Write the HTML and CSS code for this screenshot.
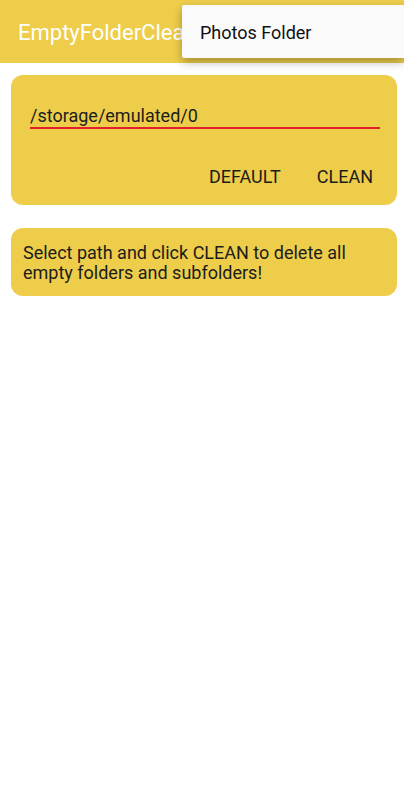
FILE: index.html
```html
<!DOCTYPE html>
<html lang="en">
<head>
    <meta charset="UTF-8">
    <meta name="viewport" content="width=device-width, initial-scale=1.0">
    <title>EmptyFolderCleaner</title>
    <link rel="stylesheet" href="styles.css">
</head>
<body>

<div class="toolbar">
    <span class="title">EmptyFolderCleaner</span>
</div>

<div class="menu">
    <div class="menu-item">Photos Folder</div>
</div>

<div class="content">
    <div class="card path-card">
        <input type="text" class="path-input" value="/storage/emulated/0">
        <div class="actions">
            <button class="flat-btn">DEFAULT</button>
            <button class="flat-btn">CLEAN</button>
        </div>
    </div>

    <div class="card info-card">
        Select path and click CLEAN to delete all empty folders and subfolders!
    </div>
</div>

</body>
</html>
```

FILE: styles.css
```css
body {
    font-family: Roboto, "Liberation Sans", sans-serif;
    margin: 0;
    padding: 0;
    background-color: #fff;
    color: #1c1c1c;
}
.toolbar {
    height: 63px;
    background-color: #edcd4a;
    display: flex;
    align-items: center;
    padding-left: 18px;
    overflow: hidden;
}
.title {
    color: #fff;
    font-size: 22px;
    white-space: nowrap;
    margin-top: 1px;
}
.menu {
    position: absolute;
    top: 5px;
    left: 182px;
    right: 0;
    height: 53px;
    background-color: #fafafa;
    border-radius: 2px 0 0 2px;
    box-shadow: 0 4px 10px rgba(0, 0, 0, 0.3);
    display: flex;
    align-items: center;
}
.menu-item {
    padding-left: 18px;
    font-size: 18px;
    color: #111;
    margin-top: 1px;
}
.content {
    padding: 12px 7px 0 11px;
}
.card {
    background-color: #edcd4a;
    border-radius: 12px;
}
.path-card {
    padding: 29px 17px 18px 19px;
}
.path-input {
    display: block;
    width: 100%;
    box-sizing: border-box;
    font-family: inherit;
    font-size: 18px;
    line-height: 22px;
    height: 25px;
    padding: 0 0 1px 0;
    border: none;
    border-bottom: 2px solid #e0202a;
    background: transparent;
    color: #1c1c1c;
    outline: none;
}
.actions {
    display: flex;
    justify-content: flex-end;
    margin-top: 38px;
    margin-right: -11px;
}
.flat-btn {
    font-family: inherit;
    font-size: 18px;
    line-height: 20px;
    padding: 0 18px;
    border: none;
    background: transparent;
    color: #1c1c1c;
    cursor: pointer;
}
.info-card {
    margin-top: 23px;
    padding: 15px 12px 13px 12px;
    font-size: 18px;
    line-height: 20px;
}
```
